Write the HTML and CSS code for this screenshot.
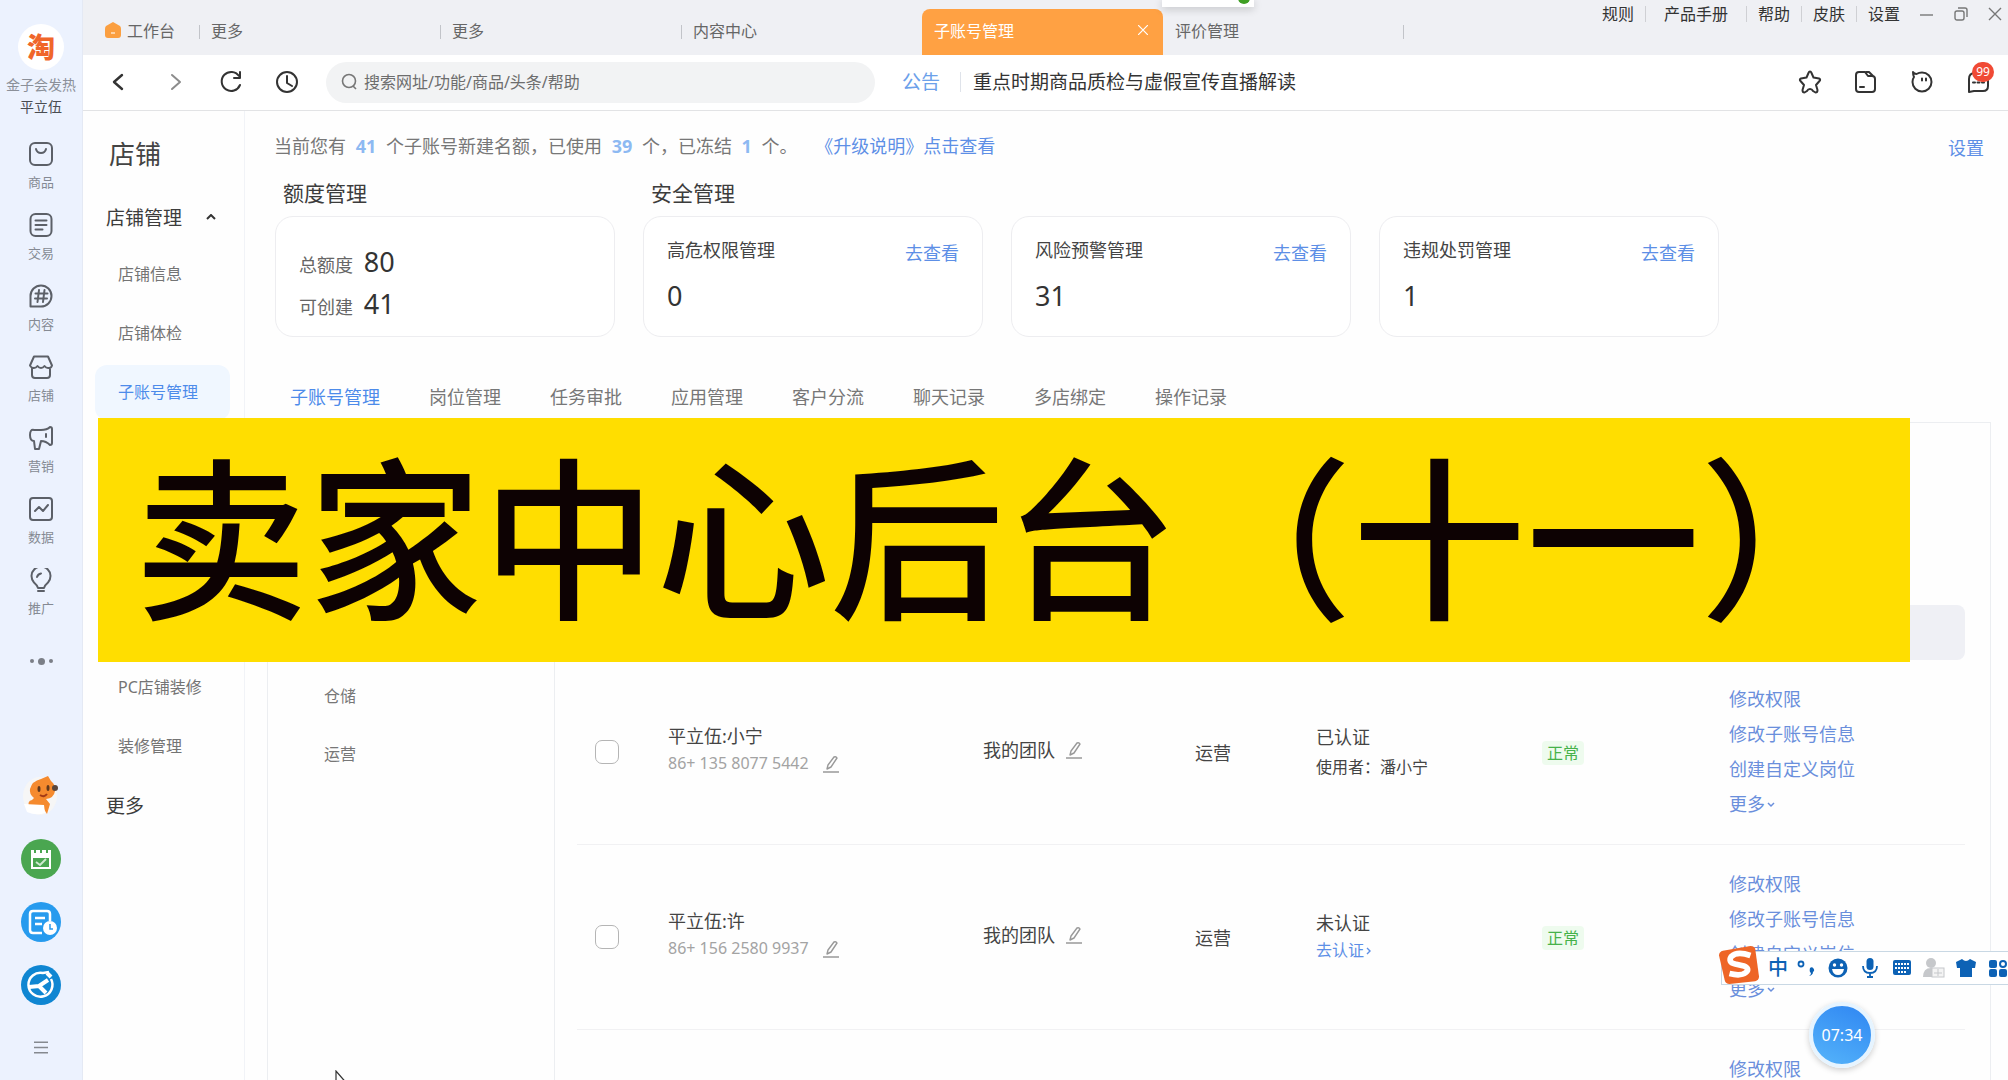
FILE: index.html
```html
<!DOCTYPE html>
<html lang="zh-CN">
<head>
<meta charset="utf-8">
<title>子账号管理</title>
<link rel="stylesheet" href="styles.css">
</head>
<body>
<svg class="defs" aria-hidden="true">
  <symbol id="pen" viewBox="0 0 18 18"><path d="M5 14l1-4 6-8q2-1 3 1l-6 9zM1 17h16" fill="none" stroke="currentColor" stroke-width="1.4" stroke-linejoin="round"/></symbol>
</svg>
<div class="app">
  <nav class="rail">
    <div class="logo">淘</div>
    <div class="shop-name">金子会发热</div>
    <div class="user-name">平立伍</div>
    <ul class="rail-list">
      <li><a href="#"><svg viewBox="0 0 24 24"><rect x="1" y="1" width="22" height="22" rx="5"/><path d="M7 7q1 4 5 4t5-4"/></svg>商品</a></li>
      <li><a href="#"><svg viewBox="0 0 24 24"><rect x="1.500" y="1" width="21" height="22" rx="5"/><path d="M6.500 7.500h11M6.500 12h11M6.500 16.500h7"/></svg>交易</a></li>
      <li><a href="#"><svg viewBox="0 0 24 24"><path d="M1.500 22.500V12A10.500 10.500 0 1 1 12 22.500zM10 6L8.500 18M15.500 6L14 18M6.500 9.500h12M6 14.500h12"/></svg>内容</a></li>
      <li><a href="#"><svg viewBox="0 0 24 24"><path d="M5 1.500h14l4 9q-1 3-4 2.500-2 0-3.500-2-1.500 2-3.500 2t-3.500-2Q7 13 5 13q-3 0-4-2.500zM3 13v7q0 3 3 3h12q3 0 3-3v-7"/></svg>店铺</a></li>
      <li><a href="#"><svg viewBox="0 0 24 24"><path d="M12 4q6 0 9-3 2 0 2 2v14q0 2-2 2-4-4-9-4l-2 8H6l-1-8Q1 15 1 9t4-5zM17 8v3"/></svg>营销</a></li>
      <li><a href="#"><svg viewBox="0 0 24 24"><rect x="1" y="1" width="22" height="22" rx="3"/><path d="M6 14l4-4 4 4 5-6"/></svg>数据</a></li>
      <li><a href="#"><svg viewBox="0 0 24 24"><path d="M9 20q-1-3-4-5.500a9.500 9.500 0 1 1 14 0q-3 2.500-4 5.500zM9 23h6M8 9q1-3 4-3.500"/></svg>推广</a></li>
    </ul>
    <button class="dots" aria-label="更多"><i></i><i></i><i></i></button>
    <div class="rail-apps">
      <a href="#" aria-label="客服"><svg viewBox="0 0 40 40"><ellipse cx="19" cy="20" rx="17" ry="19" fill="#f6f6f6"/><path d="M20 3l7-3 3 5q5 4 4 10-1 7-9 8l4 5-3 10-5-8-13 1q-2-6 3-7l2-2q-5-4-4-9 2-8 11-10z" fill="#f58a2e"/><circle cx="34" cy="12" r="3" fill="#5a463c"/><ellipse cx="18" cy="13" rx="1.500" ry="3" fill="#62381c"/><ellipse cx="27" cy="12" rx="1.500" ry="3" fill="#62381c"/><path d="M19 19q4 3 7-1" stroke="#a33a16" stroke-width="2" fill="none"/><path d="M3 28l20 1 1 8q-9 3-18-1z" fill="#fff"/></svg></a>
      <a href="#" aria-label="日程"><svg viewBox="0 0 40 40"><circle cx="20" cy="20" r="20" fill="#4aa650"/><path d="M11 12v17h18V12" fill="none" stroke="#fff" stroke-width="2"/><path d="M10 11h3v3h2v-3h4v3h2v-3h4v3h2v-3h3v8H10z" fill="#fff"/><path d="M15 23l4 3 6-6" fill="none" stroke="#cfe9cf" stroke-width="2"/></svg></a>
      <a href="#" aria-label="订单"><svg viewBox="0 0 40 40"><circle cx="20" cy="20" r="20" fill="#279bee"/><path d="M21 31H12q-3 0-3-3V12q0-3 3-3h14q3 0 3 3v7" fill="none" stroke="#fff" stroke-width="2.500"/><path d="M14 16h10M14 22h7" stroke="#fff" stroke-width="2.500"/><circle cx="29" cy="26" r="7" fill="#fff"/><path d="M29 22v5h3" fill="none" stroke="#279bee" stroke-width="1.500"/></svg></a>
      <a href="#" aria-label="工具"><svg viewBox="0 0 40 40"><circle cx="20" cy="20" r="20" fill="#0f86d2"/><path d="M30 14a12 12 0 1 1-8-6l6-1" fill="none" stroke="#fff" stroke-width="2.500"/><path d="M8 22l10-1 9-6M18 21l7 7M26 8l4 4" fill="none" stroke="#fff" stroke-width="4"/></svg></a>
    </div>
    <button class="burger" aria-label="菜单"><svg viewBox="0 0 16 14"><path d="M0 1h16M0 7h16M0 13h16" stroke="#85898f" stroke-width="1.600"/></svg></button>
  </nav>

  <div class="frame">
    <header class="tabbar">
      <a class="tab home" href="#"><svg viewBox="0 0 16 16"><path d="M8 0l7 4q1 1 1 3v6q0 3-3 3H3q-3 0-3-3V7q0-2 1-3z" fill="#fb9f40"/><path d="M6 11h4" stroke="#ffe3c4" stroke-width="1.500"/></svg>工作台</a>
      <a class="tab ruled" href="#">更多</a>
      <a class="tab ruled" href="#">更多</a>
      <a class="tab ruled" href="#">内容中心</a>
      <div class="tab active"><a href="#">子账号管理</a><button aria-label="关闭"><svg viewBox="0 0 10 10"><path d="M0 0l10 10M10 0L0 10"/></svg></button></div>
      <a class="tab ruled-end" href="#">评价管理</a>
      <div class="window-menu">
        <a href="#">规则</a><a class="wide" href="#">产品手册</a><a href="#">帮助</a><a href="#">皮肤</a><a href="#">设置</a>
        <div class="window-buttons">
          <button aria-label="最小化"><svg viewBox="0 0 14 14"><path d="M0 8h13"/></svg></button>
          <button aria-label="还原"><svg viewBox="0 0 14 14"><rect x="1" y="4" width="9" height="9" rx="2"/><path d="M4 1h7q2 0 2 2v7"/></svg></button>
          <button aria-label="关闭窗口"><svg viewBox="0 0 14 14"><path d="M1 1l12 12M13 1L1 13"/></svg></button>
        </div>
      </div>
    </header>

    <div class="toolbar">
      <button aria-label="后退"><svg viewBox="0 0 24 24"><path d="M15 5l-8 7 8 7" stroke-width="2.400"/></svg></button>
      <button class="dim" aria-label="前进"><svg viewBox="0 0 24 24"><path d="M9 5l8 7-8 7"/></svg></button>
      <button aria-label="刷新"><svg viewBox="0 0 24 24"><path d="M20 6a9.500 9.500 0 1 0 1 9M21 2v6h-6"/></svg></button>
      <button aria-label="历史"><svg viewBox="0 0 24 24"><circle cx="12" cy="12" r="10"/><path d="M12 6v7l5 3"/></svg></button>
      <label class="search"><svg viewBox="0 0 18 18"><circle cx="8" cy="8" r="6.500"/><path d="M12 13l3 3"/></svg><input type="text" aria-label="搜索" placeholder="搜索网址/功能/商品/头条/帮助"></label>
      <a class="notice-tag" href="#">公告</a>
      <a class="notice-text" href="#">重点时期商品质检与虚假宣传直播解读</a>
      <div class="tools">
        <button aria-label="收藏"><svg viewBox="0 0 24 24"><path d="M12 1.500q1 0 1.500 1.500L15.500 7.500l5.500 1q2 1 .500 2.500L18 15l1.500 5q0 2.500-2 2.500L15 21q-1-2-3-2t-3 2l-2.500 1.500q-2 0-2-2.500L6 15l-3.500-4Q1 9.500 3 8.500l5.500-1L10.500 3Q11 1.500 12 1.500z"/></svg></button>
        <button aria-label="文件夹"><svg viewBox="0 0 24 24"><path d="M5 2h6l3 4h4q3 0 3 3v10q0 3-3 3H5q-3 0-3-3V5q0-3 3-3zM12 2h3l4 4M6 17h4"/></svg></button>
        <button aria-label="客服"><svg viewBox="0 0 24 24"><path d="M3 2q1 2 3.500 2Q9 2.500 12 2.500A9.500 9.500 0 1 1 2.500 12Q2.500 9 4 7 3 5 3 2zM12 8.500v2M16 8.500v2"/></svg></button>
        <button class="messages" aria-label="消息"><svg viewBox="0 0 24 24"><path d="M3 22V9q0-6 6-6h8q5 0 5 6v7q0 5-5 5H8zM7 12.500h2M11.500 12.500h2M16 12.500h2"/></svg><span class="badge">99</span></button>
      </div>
    </div>

    <div class="body">
      <aside class="menu">
        <h1>店铺</h1>
        <button class="group">店铺管理<svg viewBox="0 0 10 6"><path d="M1 5l4-4 4 4"/></svg></button>
        <ul>
          <li><a href="#">店铺信息</a></li>
          <li><a href="#">店铺体检</a></li>
          <li><a class="on" href="#">子账号管理</a></li>
        </ul>
        <ul class="decor">
          <li><a href="#">PC店铺装修</a></li>
          <li><a href="#">装修管理</a></li>
        </ul>
        <button class="group more">更多</button>
      </aside>

      <main class="main">
        <div class="quota-line">
          <p>当前您有 <b>41</b> 个子账号新建名额，已使用 <b>39</b> 个，已冻结 <b>1</b> 个。 <a href="#">《升级说明》点击查看</a></p>
          <a class="settings" href="#">设置</a>
        </div>
        <div class="summary">
          <section>
            <h2>额度管理</h2>
            <div class="cards">
              <div class="card totals"><p>总额度 <strong>80</strong></p><p>可创建 <strong>41</strong></p></div>
            </div>
          </section>
          <section>
            <h2>安全管理</h2>
            <div class="cards">
              <div class="card"><div class="card-head"><h3>高危权限管理</h3><a href="#">去查看</a></div><strong>0</strong></div>
              <div class="card"><div class="card-head"><h3>风险预警管理</h3><a href="#">去查看</a></div><strong>31</strong></div>
              <div class="card"><div class="card-head"><h3>违规处罚管理</h3><a href="#">去查看</a></div><strong>1</strong></div>
            </div>
          </section>
        </div>
        <nav class="subtabs">
          <a class="on" href="#">子账号管理</a><a href="#">岗位管理</a><a href="#">任务审批</a><a href="#">应用管理</a><a href="#">客户分流</a><a href="#">聊天记录</a><a href="#">多店绑定</a><a href="#">操作记录</a>
        </nav>
        <div class="panel">
          <ul class="tree"><li><a href="#">仓储</a></li><li><a href="#">运营</a></li></ul>
          <div class="accounts">
            <table>
              <colgroup><col class="c-check"><col class="c-name"><col class="c-team"><col class="c-role"><col class="c-cert"><col class="c-state"><col></colgroup>
              <thead><tr><th></th><th></th><th></th><th></th><th></th><th></th><th></th></tr></thead>
              <tbody>
                <tr>
                  <td class="check"><input type="checkbox" aria-label="选择 平立伍:小宁"></td>
                  <td class="raised"><div class="name">平立伍:小宁</div><div class="phone">86+ 135 8077 5442<button aria-label="编辑手机号"><svg><use href="#pen"/></svg></button></div></td>
                  <td class="raised"><div class="team">我的团队<button aria-label="编辑团队"><svg><use href="#pen"/></svg></button></div></td>
                  <td>运营</td>
                  <td><div class="cert">已认证</div><div class="cert-note">使用者：潘小宁</div></td>
                  <td><span class="state">正常</span></td>
                  <td class="actions"><a href="#">修改权限</a><a href="#">修改子账号信息</a><a href="#">创建自定义岗位</a><a href="#">更多<svg viewBox="0 0 8 6"><path d="M1 1l3 3 3-3"/></svg></a></td>
                </tr>
                <tr>
                  <td class="check"><input type="checkbox" aria-label="选择 平立伍:许"></td>
                  <td class="raised"><div class="name">平立伍:许</div><div class="phone">86+ 156 2580 9937<button aria-label="编辑手机号"><svg><use href="#pen"/></svg></button></div></td>
                  <td class="raised"><div class="team">我的团队<button aria-label="编辑团队"><svg><use href="#pen"/></svg></button></div></td>
                  <td>运营</td>
                  <td><div class="name">未认证</div><a class="verify" href="#">去认证<svg viewBox="0 0 6 8"><path d="M1 1l3 3-3 3"/></svg></a></td>
                  <td><span class="state">正常</span></td>
                  <td class="actions"><a href="#">修改权限</a><a href="#">修改子账号信息</a><a href="#">创建自定义岗位</a><a href="#">更多<svg viewBox="0 0 8 6"><path d="M1 1l3 3 3-3"/></svg></a></td>
                </tr>
                <tr>
                  <td></td><td></td><td></td><td></td><td></td><td></td>
                  <td class="actions"><a href="#">修改权限</a><a href="#">修改子账号信息</a><a href="#">创建自定义岗位</a><a href="#">更多</a></td>
                </tr>
              </tbody>
            </table>
          </div>
        </div>
      </main>
    </div>
  </div>
</div>

<div class="peek"><i></i></div>
<div class="banner">卖家中心后台（十一）</div>
<div class="ime">
  <svg class="ime-logo" viewBox="0 0 44 42"><path d="M5 6L34 1q4 0 5 3l4 29q0 4-4 5L12 41q-4 0-5-4L1 11q0-4 4-5z" fill="#ee6526"/><path d="M34 11Q20 6 14 12q-4 6 4 8l9 2q7 3 2 7-5 4-17 1" fill="none" stroke="#fff" stroke-width="6"/></svg>
  <span class="ime-mode">中</span>
  <svg viewBox="0 0 24 24"><circle cx="7" cy="8" r="2.500" fill="none" stroke="#0d62b5" stroke-width="1.800"/><path d="M16 12a2.500 2.500 0 1 1 3 4q0 3-4 4 2-1 2-3-2-1-1-5z" fill="#0d62b5"/></svg>
  <svg viewBox="0 0 24 24"><circle cx="12" cy="12" r="9.500" fill="#0d62b5"/><circle cx="8.500" cy="9" r="1.700" fill="#fff"/><circle cx="15.500" cy="9" r="1.700" fill="#fff"/><path d="M6 13h12q-1 6-6 6t-6-6z" fill="#fff"/></svg>
  <svg viewBox="0 0 24 24"><rect x="8.500" y="2" width="7" height="12" rx="3.500" fill="#0d62b5"/><path d="M5 10q0 7 7 7t7-7M12 17v3M9 21h6" fill="none" stroke="#0d62b5" stroke-width="1.800"/></svg>
  <svg viewBox="0 0 24 24"><rect x="3" y="4" width="18" height="15" rx="2" fill="#0d62b5"/><path d="M5 8h14M5 12h14M8 16h8" stroke="#fff" stroke-width="2" stroke-dasharray="2 1"/></svg>
  <svg viewBox="0 0 24 24"><circle cx="9" cy="7" r="5" fill="#c6c8cb"/><path d="M1 21q0-9 8-9 4 0 5 2v7z" fill="#c6c8cb"/><rect x="10" y="12" width="12" height="9" fill="#f4f4f4" stroke="#c6c8cb"/><path d="M12 17h8M16 13v7" stroke="#c6c8cb"/></svg>
  <svg viewBox="0 0 24 24"><path d="M8 3q4 4 8 0l6 3-1 6h-3v9H6v-9H3L2 6z" fill="#0d62b5"/></svg>
  <svg viewBox="0 0 24 24"><rect x="3" y="4" width="8" height="8" rx="2" fill="#0d62b5"/><circle cx="17" cy="8" r="3" fill="none" stroke="#0d62b5" stroke-width="2"/><rect x="3" y="13" width="8" height="8" rx="2" fill="#0d62b5"/><rect x="13" y="13" width="8" height="8" rx="2" fill="#0d62b5"/></svg>
</div>
<div class="timer">07:34</div>
<svg class="pointer" viewBox="0 0 16 24"><path d="M1 1v20l5-5h8z" fill="#fff" stroke="#333" stroke-width="1.200"/></svg>
</body>
</html>
```
FILE: styles.css
```css
* { box-sizing: border-box; }
body {
  margin: 0;
  font-family: "Noto Sans", "Noto Sans CJK SC", sans-serif;
  font-size: 18px;
  color: #444;
  background: #fefefe;
  overflow: hidden;
}
h1, h2, h3, p, ul { margin: 0; padding: 0; font-weight: 400; }
ul { list-style: none; }
a { color: inherit; text-decoration: none; }
button { border: 0; padding: 0; background: none; font: inherit; color: inherit; }
svg { display: block; flex: none; }
.defs { position: absolute; width: 0; height: 0; }

.app { display: flex; height: 100vh; }
.frame { flex: 1; min-width: 0; display: flex; flex-direction: column; }

/* left rail */
.rail {
  width: 83px;
  flex: none;
  display: flex;
  flex-direction: column;
  align-items: center;
  padding-top: 24px;
  background: #ecf2fe;
  border-right: 1px solid #e4e9f4;
}
.logo {
  width: 46px;
  height: 46px;
  border-radius: 50%;
  background: #fff;
  color: #f0662a;
  font-size: 28px;
  font-weight: 900;
  line-height: 46px;
  text-align: center;
}
.shop-name { margin-top: 4px; font-size: 14px; line-height: 22px; color: #8b9099; white-space: nowrap; }
.user-name { font-size: 14px; line-height: 22px; color: #4a4d52; }
.rail-list { margin-top: 16px; }
.rail-list a {
  height: 71px;
  display: flex;
  flex-direction: column;
  align-items: center;
  gap: 6px;
  padding-top: 8px;
  font-size: 13px;
  line-height: 20px;
  color: #858a93;
}
.rail-list svg { width: 24px; height: 24px; fill: none; stroke: #5c6068; stroke-width: 2; stroke-linejoin: round; stroke-linecap: round; }
.dots { display: flex; align-items: center; gap: 4px; height: 24px; margin-top: 18px; }
.dots i { width: 4px; height: 4px; border-radius: 50%; background: #7b7f87; }
.dots i:nth-child(2) { width: 7px; height: 7px; }
.rail-apps { margin-top: auto; display: flex; flex-direction: column; gap: 23px; }
.rail-apps svg { width: 40px; height: 40px; }
.burger { margin: 30px 0 21px; height: 24px; }
.burger svg { width: 14px; height: 13px; }

/* tab strip */
.tabbar { flex: none; height: 55px; display: flex; align-items: flex-end; background: #eff0f4; font-size: 16px; color: #666; }
.tab { position: relative; width: 241px; height: 46px; flex: none; display: flex; align-items: center; padding: 0 0 4px 12px; }
.tab.home { width: 116px; padding-left: 22px; gap: 6px; }
.tab.home svg { width: 16px; height: 16px; }
.ruled::before, .ruled-end::after { content: ""; position: absolute; left: 0; top: 16px; width: 1px; height: 14px; background: #c2c4c9; }
.ruled-end::after { left: auto; right: 0; }
.tab.active { justify-content: space-between; padding-right: 15px; border-radius: 8px 8px 0 0; background: #ffa143; color: #fff; }
.tab.active svg { width: 10px; height: 10px; stroke: #fff; stroke-width: 1.2; }
.window-menu { margin-left: auto; align-self: flex-start; display: flex; align-items: center; height: 28px; padding-right: 1px; color: #333; }
.window-menu > a { padding: 0 11px; line-height: 16px; border-right: 1px solid #cfd0d4; }
.window-menu > a.wide { padding: 0 18px; }
.window-menu > a:nth-of-type(5) { border: 0; padding-right: 15px; }
.window-buttons { display: flex; gap: 10px; }
.window-buttons button { width: 24px; height: 24px; display: grid; place-items: center; }
.window-buttons svg { width: 14px; height: 14px; fill: none; stroke: #777; stroke-width: 1.4; }

/* address bar */
.toolbar { flex: none; height: 56px; display: flex; align-items: center; padding: 0 2px 1px 8px; background: #fff; border-bottom: 1px solid #e2e3e5; }
.toolbar button { width: 56px; height: 40px; display: grid; place-items: center; }
.toolbar button svg { width: 24px; height: 24px; fill: none; stroke: #333; stroke-width: 2; stroke-linejoin: round; stroke-linecap: round; }
.toolbar .dim svg { stroke: #8c8c8c; }
.search { flex: 0 1 549px; height: 41px; margin-left: 11px; display: flex; align-items: center; gap: 5px; padding: 0 15px; border-radius: 21px; background: #f2f3f4; }
.search svg { width: 18px; height: 18px; fill: none; stroke: #777; stroke-width: 1.6; }
.search input { flex: 1; border: 0; padding: 0; background: none; font: inherit; font-size: 16px; outline: 0; }
.search input::placeholder { color: #6d6d6d; }
.notice-tag { margin-left: 27px; padding-right: 20px; border-right: 1px solid #dfe3ea; font-size: 19px; line-height: 20px; color: #6ba0ea; white-space: nowrap; }
.notice-text { margin-left: 12px; font-size: 19px; line-height: 28px; color: #333; white-space: nowrap; }
.tools { margin-left: auto; display: flex; }
.messages { position: relative; }
.badge { position: absolute; left: 22px; top: 0; width: 22px; height: 20px; border-radius: 10px; background: #f04a35; color: #fff; font-size: 12px; line-height: 20px; text-align: center; }

.body { flex: 1; min-height: 0; display: flex; }

/* shop menu */
.menu { width: 162px; flex: none; padding: 23px 12px 0; border-right: 1px solid #f1f3f7; overflow: hidden; }
.menu h1 { padding-left: 14px; font-size: 26px; line-height: 40px; color: #444; }
.group { display: flex; align-items: center; gap: 24px; height: 44px; margin: 21px 0 6px; padding-left: 11px; font-size: 19px; color: #3c3c3c; }
.group svg { width: 10px; height: 6px; fill: none; stroke: #333; stroke-width: 2; }
.menu li { padding: 2px 2px 2px 0; }
.menu li a { display: block; height: 55px; padding-left: 23px; border-radius: 12px; font-size: 16px; line-height: 55px; color: #747474; }
.menu li a.on { background: #f0f7ff; color: #4d8bea; }
.menu .decor { margin-top: 236px; }
.group.more { height: 58px; margin: 0; }

/* content */
.main { flex: 1; min-width: 0; padding-top: 20px; overflow-y: auto; scrollbar-width: none; }
.main a { color: #5d8fe6; }
.quota-line { display: flex; justify-content: space-between; height: 30px; padding: 0 24px 0 29px; line-height: 30px; color: #777; }
.quota-line b { margin: 0 5px; color: #8db9f2; }
.quota-line p a { margin-left: 13px; }
.quota-line .settings { line-height: 34px; }
.summary { display: flex; gap: 28px; margin-top: 16px; padding-left: 30px; }
.summary h2 { padding: 0 0 7px 8px; font-size: 21px; line-height: 32px; color: #3c3c3c; }
.cards { display: flex; gap: 28px; }
.card { width: 340px; height: 121px; padding: 19px 23px; border: 1px solid #ededf0; border-radius: 18px; background: #fff; }
.card-head { display: flex; justify-content: space-between; align-items: flex-end; }
.card h3 { font-size: 18px; line-height: 28px; }
.card-head a { line-height: 22px; }
.card strong { display: block; margin-top: 14px; font-size: 27px; font-weight: 400; line-height: 36px; color: #333; }
.totals { padding-top: 24px; }
.totals p { line-height: 42px; height: 42px; color: #666; }
.totals strong { display: inline; margin-left: 6px; line-height: 42px; }
.subtabs { display: flex; gap: 49px; margin-top: 45px; padding-left: 45px; line-height: 30px; white-space: nowrap; }
.subtabs a { color: #777; }
.subtabs a.on { color: #4d8bea; }
.panel { display: flex; margin: 10px 17px 0 22px; border: 1px solid #eceef1; border-bottom: 0; }
.tree { width: 287px; flex: none; padding-top: 244px; border-right: 1px solid #eceef1; }
.tree a { display: block; padding-left: 56px; font-size: 16px; line-height: 58px; color: #777; }
.accounts { flex: 1; min-width: 0; padding: 182px 25px 0 22px; }
table { width: 100%; table-layout: fixed; border-collapse: separate; border-spacing: 0; }
.c-check { width: 91px; }
.c-name { width: 315px; }
.c-team { width: 212px; }
.c-role { width: 121px; }
.c-cert { width: 226px; }
.c-state { width: 187px; }
th { height: 55px; padding: 0; background: #eff0f5; }
th:first-child { border-radius: 8px 0 0 8px; }
th:last-child { border-radius: 0 8px 8px 0; }
td { height: 185px; padding: 0; border-bottom: 1px solid #f1f1f3; vertical-align: middle; }
td.check { padding-left: 18px; }
td.raised { padding-bottom: 4px; }
.check input { appearance: none; display: block; width: 24px; height: 24px; margin: 0; border: 1px solid #b5b5b5; border-radius: 7px; background: #fff; }
.name { line-height: 27px; }
.phone { display: flex; align-items: center; gap: 13px; font-size: 16px; line-height: 27px; color: #a3a3a3; }
.team { display: flex; align-items: center; gap: 10px; line-height: 27px; }
td button { color: #999; }
td button svg { width: 18px; height: 18px; }
.cert { line-height: 30px; }
.cert-note { font-size: 16px; line-height: 30px; }
.verify { display: flex; align-items: center; gap: 2px; font-size: 16px; line-height: 27px; }
.verify svg { width: 6px; height: 8px; fill: none; stroke: currentColor; stroke-width: 1.4; }
.state { display: inline-block; padding: 0 5px; border-radius: 4px; background: #eefbee; color: #46b24a; font-size: 16px; line-height: 24px; }
.actions a { display: flex; align-items: center; gap: 2px; line-height: 35px; color: #6a8fdc; }
.actions svg { width: 8px; height: 6px; fill: none; stroke: currentColor; stroke-width: 1.5; }

/* layers above the page */
.peek { position: absolute; left: 1162px; top: 0; width: 92px; height: 7px; background: #fff; box-shadow: 0 2px 8px rgba(0, 0, 0, .2); overflow: clip; overflow-clip-margin: 12px; }
.peek i { position: absolute; right: 4px; top: -8px; width: 12px; height: 12px; border-radius: 50%; background: #3f9f24; }
.banner {
  position: absolute;
  left: 98px;
  right: 98px;
  top: 418px;
  height: 244px;
  background: #ffde00;
  color: #0d0203;
  font-family: "Noto Sans CJK SC", sans-serif;
  font-size: 174px;
  font-weight: 500;
  line-height: 224px;
  text-align: center;
  white-space: nowrap;
}
.ime { position: absolute; right: -2px; bottom: 95px; height: 34px; display: flex; align-items: center; gap: 8px; background: #fff; border: 1px solid #c9d8e4; border-right: 0; }
.ime svg { width: 24px; height: 24px; }
.ime .ime-logo { width: 42px; height: 40px; margin: 0 0 6px -4px; }
.ime-mode { margin-right: -2px; font-size: 20px; font-weight: 500; line-height: 24px; color: #0d62b5; }
.timer {
  position: absolute;
  right: 133px;
  bottom: 12px;
  width: 66px;
  height: 66px;
  border: 4px solid #e6f4ff;
  border-radius: 50%;
  background: linear-gradient(205deg, #2f86f2, #55b4fa);
  box-shadow: 0 2px 6px rgba(0, 0, 0, .2);
  color: #fff;
  font-size: 16px;
  line-height: 58px;
  text-align: center;
}
.pointer { position: absolute; left: 335px; bottom: -14px; width: 16px; height: 24px; }
```
